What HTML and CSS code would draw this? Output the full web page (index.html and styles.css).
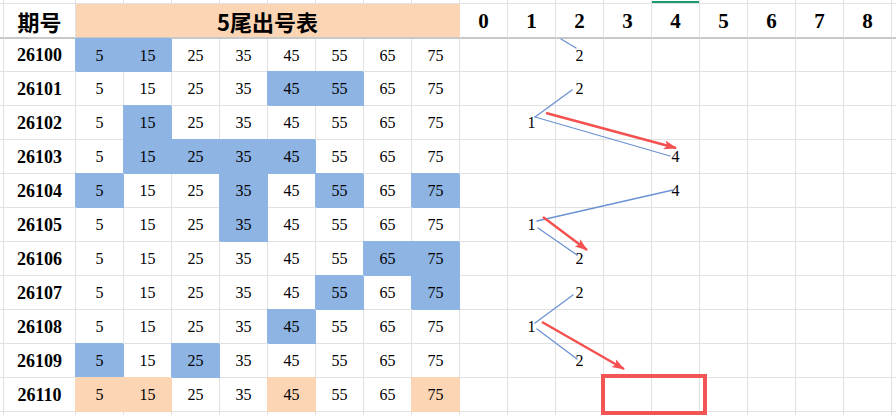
FILE: index.html
```html
<!DOCTYPE html>
<html lang="zh">
<head>
<meta charset="utf-8">
<title>5尾出号表</title>
<link rel="stylesheet" href="styles.css">
</head>
<body>
<div class="sheet">
  <div class="row top">
    <div class="c s"></div><div class="c"></div>
    <div class="c"></div><div class="c"></div><div class="c"></div><div class="c"></div><div class="c"></div><div class="c"></div><div class="c"></div><div class="c"></div>
    <div class="c"></div><div class="c"></div><div class="c"></div><div class="c"></div><div class="c sel"></div><div class="c"></div><div class="c"></div><div class="c"></div><div class="c"></div>
    <div class="c r"></div>
  </div>
  <div class="row hdr">
    <div class="c s"></div>
    <div class="c h">期号</div>
    <div class="c h title">5尾出号表</div>
    <div class="c n">0</div><div class="c n">1</div><div class="c n">2</div><div class="c n">3</div><div class="c n">4</div><div class="c n">5</div><div class="c n">6</div><div class="c n">7</div><div class="c n">8</div>
    <div class="c r"></div>
  </div>

  <div class="row">
    <div class="c s"></div><div class="c p">26100</div>
    <div class="c v b">5</div><div class="c v b">15</div><div class="c v">25</div><div class="c v">35</div><div class="c v">45</div><div class="c v">55</div><div class="c v">65</div><div class="c v">75</div>
    <div class="c t"></div><div class="c t"></div><div class="c t">2</div><div class="c t"></div><div class="c t"></div><div class="c t"></div><div class="c t"></div><div class="c t"></div><div class="c t"></div>
    <div class="c r"></div>
  </div>
  <div class="row">
    <div class="c s"></div><div class="c p">26101</div>
    <div class="c v">5</div><div class="c v">15</div><div class="c v">25</div><div class="c v">35</div><div class="c v b">45</div><div class="c v b">55</div><div class="c v">65</div><div class="c v">75</div>
    <div class="c t"></div><div class="c t"></div><div class="c t">2</div><div class="c t"></div><div class="c t"></div><div class="c t"></div><div class="c t"></div><div class="c t"></div><div class="c t"></div>
    <div class="c r"></div>
  </div>
  <div class="row">
    <div class="c s"></div><div class="c p">26102</div>
    <div class="c v">5</div><div class="c v b">15</div><div class="c v">25</div><div class="c v">35</div><div class="c v">45</div><div class="c v">55</div><div class="c v">65</div><div class="c v">75</div>
    <div class="c t"></div><div class="c t">1</div><div class="c t"></div><div class="c t"></div><div class="c t"></div><div class="c t"></div><div class="c t"></div><div class="c t"></div><div class="c t"></div>
    <div class="c r"></div>
  </div>
  <div class="row">
    <div class="c s"></div><div class="c p">26103</div>
    <div class="c v">5</div><div class="c v b">15</div><div class="c v b">25</div><div class="c v b">35</div><div class="c v b">45</div><div class="c v">55</div><div class="c v">65</div><div class="c v">75</div>
    <div class="c t"></div><div class="c t"></div><div class="c t"></div><div class="c t"></div><div class="c t">4</div><div class="c t"></div><div class="c t"></div><div class="c t"></div><div class="c t"></div>
    <div class="c r"></div>
  </div>
  <div class="row">
    <div class="c s"></div><div class="c p">26104</div>
    <div class="c v b">5</div><div class="c v">15</div><div class="c v">25</div><div class="c v b">35</div><div class="c v">45</div><div class="c v b">55</div><div class="c v">65</div><div class="c v b">75</div>
    <div class="c t"></div><div class="c t"></div><div class="c t"></div><div class="c t"></div><div class="c t">4</div><div class="c t"></div><div class="c t"></div><div class="c t"></div><div class="c t"></div>
    <div class="c r"></div>
  </div>
  <div class="row">
    <div class="c s"></div><div class="c p">26105</div>
    <div class="c v">5</div><div class="c v">15</div><div class="c v">25</div><div class="c v b">35</div><div class="c v">45</div><div class="c v">55</div><div class="c v">65</div><div class="c v">75</div>
    <div class="c t"></div><div class="c t">1</div><div class="c t"></div><div class="c t"></div><div class="c t"></div><div class="c t"></div><div class="c t"></div><div class="c t"></div><div class="c t"></div>
    <div class="c r"></div>
  </div>
  <div class="row">
    <div class="c s"></div><div class="c p">26106</div>
    <div class="c v">5</div><div class="c v">15</div><div class="c v">25</div><div class="c v">35</div><div class="c v">45</div><div class="c v">55</div><div class="c v b">65</div><div class="c v b">75</div>
    <div class="c t"></div><div class="c t"></div><div class="c t">2</div><div class="c t"></div><div class="c t"></div><div class="c t"></div><div class="c t"></div><div class="c t"></div><div class="c t"></div>
    <div class="c r"></div>
  </div>
  <div class="row">
    <div class="c s"></div><div class="c p">26107</div>
    <div class="c v">5</div><div class="c v">15</div><div class="c v">25</div><div class="c v">35</div><div class="c v">45</div><div class="c v b">55</div><div class="c v">65</div><div class="c v b">75</div>
    <div class="c t"></div><div class="c t"></div><div class="c t">2</div><div class="c t"></div><div class="c t"></div><div class="c t"></div><div class="c t"></div><div class="c t"></div><div class="c t"></div>
    <div class="c r"></div>
  </div>
  <div class="row">
    <div class="c s"></div><div class="c p">26108</div>
    <div class="c v">5</div><div class="c v">15</div><div class="c v">25</div><div class="c v">35</div><div class="c v b">45</div><div class="c v">55</div><div class="c v">65</div><div class="c v">75</div>
    <div class="c t"></div><div class="c t">1</div><div class="c t"></div><div class="c t"></div><div class="c t"></div><div class="c t"></div><div class="c t"></div><div class="c t"></div><div class="c t"></div>
    <div class="c r"></div>
  </div>
  <div class="row">
    <div class="c s"></div><div class="c p">26109</div>
    <div class="c v b">5</div><div class="c v">15</div><div class="c v b">25</div><div class="c v">35</div><div class="c v">45</div><div class="c v">55</div><div class="c v">65</div><div class="c v">75</div>
    <div class="c t"></div><div class="c t"></div><div class="c t">2</div><div class="c t"></div><div class="c t"></div><div class="c t"></div><div class="c t"></div><div class="c t"></div><div class="c t"></div>
    <div class="c r"></div>
  </div>
  <div class="row">
    <div class="c s"></div><div class="c p">26110</div>
    <div class="c v o">5</div><div class="c v o">15</div><div class="c v">25</div><div class="c v">35</div><div class="c v o">45</div><div class="c v">55</div><div class="c v">65</div><div class="c v o">75</div>
    <div class="c t"></div><div class="c t"></div><div class="c t"></div><div class="c t"></div><div class="c t"></div><div class="c t"></div><div class="c t"></div><div class="c t"></div><div class="c t"></div>
    <div class="c r"></div>
  </div>
  <div class="row end">
    <div class="c s"></div><div class="c"></div>
    <div class="c"></div><div class="c"></div><div class="c"></div><div class="c"></div><div class="c"></div><div class="c"></div><div class="c"></div><div class="c"></div>
    <div class="c"></div><div class="c"></div><div class="c"></div><div class="c"></div><div class="c"></div><div class="c"></div><div class="c"></div><div class="c"></div><div class="c"></div>
    <div class="c r"></div>
  </div>

  <svg class="overlay" width="896" height="415" viewBox="0 0 896 415" xmlns="http://www.w3.org/2000/svg">
    <defs>
      <marker id="ah" markerUnits="userSpaceOnUse" markerWidth="14" markerHeight="10" refX="12" refY="5" orient="auto">
        <path d="M0,0.5 L13,5 L0,9.5 L3,5 Z" fill="#f4504f"/>
      </marker>
    </defs>
    <g stroke="#6b92d2" stroke-width="1.3" fill="none" stroke-linecap="round">
      <line x1="561" y1="39" x2="576" y2="48"/>
      <line x1="572" y1="90" x2="535" y2="117"/>
      <line x1="535" y1="117" x2="670" y2="156"/>
      <line x1="537" y1="221" x2="673" y2="190"/>
      <line x1="538" y1="228" x2="577" y2="255"/>
      <line x1="535" y1="323" x2="573" y2="295"/>
      <line x1="537" y1="329" x2="577" y2="359"/>
    </g>
    <g stroke="#f4504f" stroke-width="2.4" fill="none">
      <line x1="546" y1="113" x2="676" y2="148" marker-end="url(#ah)"/>
      <line x1="543" y1="217" x2="587" y2="250" marker-end="url(#ah)"/>
      <line x1="542" y1="322" x2="624" y2="369" marker-end="url(#ah)"/>
    </g>
    <rect x="603" y="376" width="102" height="37" fill="none" stroke="#f35454" stroke-width="4"/>
  </svg>
</div>
</body>
</html>
```

FILE: styles.css
```css
html, body {
  margin: 0;
  padding: 0;
  background: #ffffff;
}

.sheet {
  position: relative;
  width: 896px;
  height: 415px;
  overflow: hidden;
  display: grid;
  grid-template-columns: 4px 72px repeat(17, 48px) 1fr;
  grid-template-rows: 4px 35px 33px repeat(10, 34px) 1fr;
  font-family: "Liberation Serif", "Noto Sans CJK SC", serif;
  color: #000;
}

.row {
  display: contents;
}

.c {
  box-sizing: border-box;
  border-right: 1px solid #e1e1e1;
  border-bottom: 1px solid #e1e1e1;
  display: flex;
  align-items: center;
  justify-content: center;
  background: #fff;
  white-space: nowrap;
}

.c.r {
  border-right: 0;
}

.end .c {
  border-bottom: 0;
}

.top .sel {
  background: linear-gradient(to bottom, #fff 0, #fff 1px, #1a9b6c 1px, #1a9b6c 3px, #fff 3px);
}

.hdr .c {
  border-bottom: 2px solid #c8c8c8;
}

.h {
  font-family: "Noto Sans CJK SC", sans-serif;
  font-weight: 700;
  font-size: 22px;
  padding-top: 1px;
}

.title {
  grid-column: span 8;
  background: #fcd5b4;
  border-right-color: #fcd5b4;
}

.n {
  font-family: "Liberation Serif", serif;
  font-weight: 700;
  font-size: 21px;
  padding-top: 1px;
}

.p {
  font-weight: 700;
  font-size: 18px;
  padding-top: 1px;
}

.v, .t {
  font-size: 16px;
  padding-top: 1px;
}

.b {
  background: #8eb4e3;
  border-color: #8eb4e3;
  box-shadow: -1px -1px 0 0 #8eb4e3;
}

.o {
  background: #fcd5b4;
  border-color: #fcd5b4;
  box-shadow: -1px -1px 0 0 #fcd5b4;
}

.overlay {
  position: absolute;
  left: 0;
  top: 0;
  pointer-events: none;
}
```
